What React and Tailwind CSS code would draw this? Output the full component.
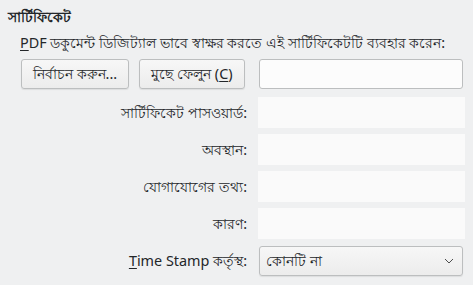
import React from "react";

const font = { fontFamily: '"Noto Sans", "Open Sans", sans-serif' };

function Btn({ children, w }) {
  return (
    <div
      className={`h-[30px] ${w} flex items-center justify-center rounded-[3px] border border-[#bcbebf] bg-gradient-to-b from-[#f7f7f7] to-[#ececec] shadow-[0_1px_1px_rgba(0,0,0,0.08)]`}
    >
      {children}
    </div>
  );
}

function Row({ label, mt, children }) {
  return (
    <div className={`flex items-center pl-[20px] ${mt}`}>
      <div className="w-[227px] text-right whitespace-nowrap">{label}</div>
      <div className="ml-[11px]">{children}</div>
    </div>
  );
}

function Disabled() {
  return <div className="w-[207px] h-[31px] bg-[#fafafa]" />;
}

export default function App() {
  return (
    <div
      className="w-[473px] h-[285px] bg-[#eff0f1] text-[#232629] text-[14.4px] leading-[20px] overflow-hidden"
      style={font}
    >
      <div className="pl-[8px] pt-[7px] font-bold">সার্টিফিকেট</div>
      <div className="pl-[20px] mt-[6px] whitespace-nowrap">
        <span className="underline underline-offset-2">P</span>DF ডকুমেন্ট ডিজিট্যাল ভাবে স্বাক্ষর করতে এই সার্টিফিকেটটি ব্যবহার করেন:
      </div>
      <div className="flex items-center mt-[6px] pl-[21px]">
        <Btn w="w-[108px]">নির্বাচন করুন...</Btn>
        <div className="ml-[10px]">
          <Btn w="w-[106px]">
            মুছে ফেলুন (<span className="underline underline-offset-2">C</span>)
          </Btn>
        </div>
        <div className="ml-[14px] w-[204px] h-[30px] rounded-[3px] border border-[#bcbebf] bg-[#fcfcfc]" />
      </div>
      <Row label="সার্টিফিকেট পাসওয়ার্ড:" mt="mt-[8px]">
        <Disabled />
      </Row>
      <Row label="অবস্থান:" mt="mt-[6px]">
        <Disabled />
      </Row>
      <Row label="যোগাযোগের তথ্য:" mt="mt-[6px]">
        <Disabled />
      </Row>
      <Row label="কারণ:" mt="mt-[6px]">
        <Disabled />
      </Row>
      <Row
        label={
          <span>
            <span className="underline underline-offset-2">T</span>ime Stamp কর্তৃস্থ:
          </span>
        }
        mt="mt-[7px]"
      >
        <div className="ml-[1px] w-[204px] h-[30px] rounded-[3px] border border-[#bcbebf] bg-gradient-to-b from-[#f7f7f7] to-[#ececec] flex items-center pl-[6px] pr-[8px] shadow-[0_1px_1px_rgba(0,0,0,0.08)]">
          <span className="flex-1">কোনটি না</span>
          <svg width="10" height="6" viewBox="0 0 10 6" fill="none">
            <path d="M1 1 L5 5 L9 1" stroke="#4d4d4d" strokeWidth="1" />
          </svg>
        </div>
      </Row>
    </div>
  );
}
